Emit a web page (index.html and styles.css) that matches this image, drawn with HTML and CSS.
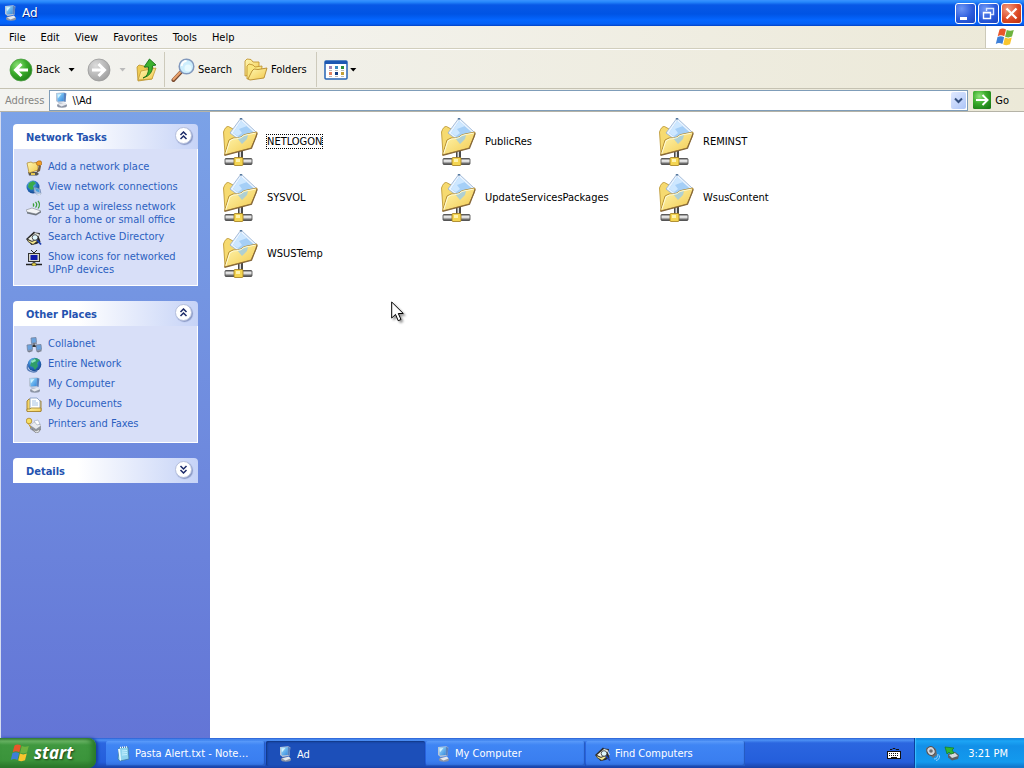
FILE: index.html
```html
<!DOCTYPE html>
<html lang="en">
<head>
    <meta charset="UTF-8">
    <meta name="viewport" content="width=device-width, initial-scale=1.0">
    <title>Ad</title>
    <link rel="stylesheet" href="styles.css">
</head>
<body>
    <!-- shared icons -->
    <svg class="sprite" aria-hidden="true">
        <defs>
            <linearGradient id="folderFill" x1="0" y1="0" x2="1" y2="1">
                <stop offset="0" stop-color="#fff8b4"/><stop offset="1" stop-color="#f2c84b"/>
            </linearGradient>
            <linearGradient id="screenFill" x1="0" y1="0" x2="1" y2="1">
                <stop offset="0" stop-color="#a8e4ff"/><stop offset="1" stop-color="#2f86dd"/>
            </linearGradient>
            <linearGradient id="pipeFill" x1="0" y1="0" x2="0" y2="1">
                <stop offset="0" stop-color="#666"/><stop offset=".4" stop-color="#fff"/><stop offset="1" stop-color="#333"/>
            </linearGradient>
            <radialGradient id="greenFill" cx=".35" cy=".3" r=".8">
                <stop offset="0" stop-color="#8fe37a"/><stop offset=".5" stop-color="#3aab2b"/><stop offset="1" stop-color="#1c7d17"/>
            </radialGradient>
            <radialGradient id="grayFill" cx=".35" cy=".3" r=".8">
                <stop offset="0" stop-color="#dcdcdc"/><stop offset="1" stop-color="#9b9b9b"/>
            </radialGradient>
            <radialGradient id="globeFill" cx=".4" cy=".3" r=".8">
                <stop offset="0" stop-color="#8fd6f5"/><stop offset=".5" stop-color="#2672c4"/><stop offset="1" stop-color="#123a7c"/>
            </radialGradient>
        </defs>
        <symbol id="computer" viewBox="0 0 16 16">
            <ellipse cx="9" cy="13.500" rx="5" ry="2.200" fill="#8d95a5"/>
            <path d="M5 12.500l7-2 1.500 2-5 2z" fill="#e6e9ef"/>
            <path d="M3 1l8-.7 2.300 1L12.500 10l-7 1L3 9z" fill="#b9c4d6"/>
            <path d="M3.700 1.700l7.300-.7-.3 8-6 .6z" fill="url(#screenFill)"/>
            <path d="M4.500 2.500l4-.4-3.700 4.500z" fill="#d3f3ff"/>
            <path d="M11 1l2.300.4-.8 8.600-1.800-1z" fill="#5a82bd"/>
        </symbol>
        <symbol id="share" viewBox="0 0 48 48">
            <path d="M22 32h5v9h-5z" fill="#4a4a4a"/><path d="M23.500 32h1.500v9h-1.500z" fill="#ddd"/>
            <rect x="9" y="40.500" width="27" height="6" rx="1" fill="url(#pipeFill)" stroke="#444" stroke-width=".8"/>
            <rect x="18" y="39.500" width="9" height="8" rx="1" fill="#f4d552" stroke="#a17b1b" stroke-width=".8"/>
            <path d="M20 41h4v3h-4z" fill="#fff3ac"/>
            <path d="M7.500 14q2-6 5-5.500l4.500 2.500 3 4 8 0-3 15-16 6z" fill="#f6da70" stroke="#b89029" stroke-width=".8"/>
            <path d="M25 0L40 14 30 27 14 15z" fill="#eaf4ff" stroke="#91acd0" stroke-width=".8"/>
            <path d="M25 3L37.500 14 29 24 17 15z" fill="#a5cff7"/>
            <path d="M25 3l6 5-8 3 3 4-4 3-5-3z" fill="#cde7ff"/>
            <path d="M23.500 0h3L25 2.500z" fill="#56789d"/>
            <path d="M8.500 37L13 22q4-3 8-2l4-1q3-3 6-3l10-2-1 5-5 11z" fill="url(#folderFill)" stroke="#ad852b" stroke-width=".9"/>
            <path d="M21 20l5-1q3-2 6-2l-1 4-5 5z" fill="#9ccbe6" opacity=".8"/>
            <path d="M9.800 35.500L14 22.700q4-2.500 7-2l4-1q3-3 6-3l8.700-1.600" fill="none" stroke="#fffbd7"/>
            <path d="M8.500 37.300l27-7 5.800-15" fill="none" stroke="#86683a" stroke-width="1.200"/>
        </symbol>
        <symbol id="flag" viewBox="0 0 20 20">
            <path d="M4.500 2.500Q7.500.5 11 2.500L9.300 9.300Q6 7.500 2.700 9.200z" fill="#e8562a"/>
            <path d="M11.800 3Q15 4.500 18.800 3L17 9.600Q13.500 11.200 10.100 9.700z" fill="#6db33f"/>
            <path d="M2.500 10.100Q5.800 8.500 9.100 10.200L7.400 17Q4 15.200.8 16.900z" fill="#3c7fd8"/>
            <path d="M9.900 10.600Q13.300 12.200 16.800 10.600L15 17.300Q11.700 18.900 8.200 17.400z" fill="#f8c52e"/>
        </symbol>
        <symbol id="find" viewBox="0 0 16 16">
            <path d="M0 9l8-7.500 1 1 5 .500-1 3.500 1.500 5.500-4 2-5 1z" fill="#2b2b2b"/>
            <path d="M2 9l7-6 4 1-2 5-5 2z" fill="#f1f1e6"/>
            <path d="M1 9.500l5 2 5-2v2l-4 3-5-3z" fill="#f6e88b" stroke="#333" stroke-width=".7"/>
            <circle cx="9" cy="7.500" r="2.800" fill="#def7ff" stroke="#555"/>
            <path d="M11 10l4 4.500" stroke="#1c3fae" stroke-width="1.800"/>
            <path d="M12.500 5l2 4" stroke="#e7e7e7"/>
        </symbol>
        <symbol id="up-chevrons" viewBox="0 0 9 9">
            <path d="M1.500 4L4.500 1l3 3M1.500 8l3-3 3 3" fill="none" stroke="#1d2b69" stroke-width="1.500"/>
        </symbol>
    </svg>

    <div class="window">
        <header class="titlebar">
            <svg class="icon"><use href="#computer"/></svg>
            <h1>Ad</h1>
            <div class="window-buttons">
                <button type="button" aria-label="Minimize">
                    <svg viewBox="0 0 19 19"><path d="M4 13h7v3H4z" fill="#fff"/></svg>
                </button>
                <button type="button" aria-label="Restore">
                    <svg viewBox="0 0 19 19"><path d="M7.500 7V4.500h7v6H12M7 4.500h8" fill="none" stroke="#dbe7ff" stroke-width="1.400"/><path d="M4.500 8.500h7v6h-7zM4 8.700h8" fill="none" stroke="#fff" stroke-width="1.400"/></svg>
                </button>
                <button type="button" class="close" aria-label="Close">
                    <svg viewBox="0 0 19 19"><path d="M4.500 4.500l10 10M14.500 4.500l-10 10" stroke="#fff" stroke-width="2.300"/></svg>
                </button>
            </div>
        </header>

        <nav class="menubar">
            <button type="button">File</button>
            <button type="button">Edit</button>
            <button type="button">View</button>
            <button type="button">Favorites</button>
            <button type="button">Tools</button>
            <button type="button">Help</button>
            <div class="brand"><svg><use href="#flag"/></svg></div>
        </nav>

        <div class="toolbar">
            <div class="tool-group">
                <button type="button" class="tool">
                    <svg viewBox="0 0 24 24"><circle cx="12" cy="12" r="11" fill="url(#greenFill)" stroke="#4d9c42" stroke-width=".8"/><path d="M19 12H7M12.500 6L6.500 12l6 6" fill="none" stroke="#fff" stroke-width="3"/></svg>
                    Back
                </button>
                <button type="button" class="arrow" aria-label="Back history"></button>
                <button type="button" class="tool forward" aria-label="Forward" disabled>
                    <svg viewBox="0 0 24 24"><circle cx="12" cy="12" r="11" fill="url(#grayFill)" stroke="#999" stroke-width=".8"/><path d="M5 12h12M11.500 6l6 6-6 6" fill="none" stroke="#fff" stroke-width="3"/></svg>
                </button>
                <button type="button" class="arrow" aria-label="Forward history" disabled></button>
                <button type="button" class="tool" aria-label="Up">
                    <svg viewBox="0 0 24 24"><path d="M3 9l2-2 5 1 2 2 7-1-1 12-14 2z" fill="#efcb52" stroke="#b9922e" stroke-width=".8"/><path d="M4 22l3-9 15-3-4 11z" fill="url(#folderFill)" stroke="#c39b36" stroke-width=".8"/><path d="M9 20q6-2 5.500-11H10L15.500 1 22 7l-3.500.8Q19 17 9 20z" fill="#3cb12e" stroke="#176f17" stroke-width=".9"/></svg>
                </button>
            </div>
            <div class="tool-group search-group">
                <button type="button" class="tool">
                    <svg viewBox="0 0 24 24"><path d="M9.500 14.500L2.500 22" stroke="#76472d" stroke-width="4" stroke-linecap="round"/><path d="M9 14.500L2.500 21.300" stroke="#e8a16b" stroke-width="2.300" stroke-linecap="round"/><circle cx="15.500" cy="8.500" r="7.300" fill="#cdeefd" stroke="#8299bd" stroke-width="1.500"/><path d="M10.500 8q1-5 5-5" fill="none" stroke="#fff" stroke-width="2"/><circle cx="17" cy="10" r="3.500" fill="#e8faff"/></svg>
                    Search
                </button>
                <button type="button" class="tool">
                    <svg viewBox="0 0 24 24"><path d="M1 18V3l2-2 4 .5L9 4h6v11z" fill="url(#folderFill)" stroke="#c29632" stroke-width=".9"/><path d="M3 21V8l2-2 4 1 2 2 7-1-1 11z" fill="#fae67e" stroke="#c29632" stroke-width=".9"/><path d="M4 21l4-8 2-2 4 .5L23 10l-3 10-14 2z" fill="url(#folderFill)" stroke="#b78a2d" stroke-width=".9"/></svg>
                    Folders
                </button>
            </div>
            <div class="tool-group views-group">
                <button type="button" class="tool" aria-label="Views">
                    <svg viewBox="0 0 24 24"><rect x="1" y="3" width="22" height="18" rx="1" fill="#fff" stroke="#2463b5" stroke-width="1.500"/><path d="M1 3h22v3H1z" fill="#1e58b2"/><path d="M5 8h3v3H5z" fill="#a283b8"/><path d="M11 8h3v3h-3z" fill="#388bc2"/><path d="M17 8h3v3h-3z" fill="#2c8c39"/><path d="M5 14h3v3H5z" fill="#e18060"/><path d="M11 14h3v3h-3z" fill="#143f84"/><path d="M17 14h3v3h-3z" fill="#c2a037"/><path d="M5 12.500h3m3 0h3m3 0h3M5 18.500h3m3 0h3m3 0h3" stroke="#aaa" stroke-width=".8"/></svg>
                </button>
                <button type="button" class="arrow" aria-label="Choose view"></button>
            </div>
        </div>

        <form class="addressbar">
            <label for="address">Address</label>
            <div class="address-field">
                <svg class="icon"><use href="#computer"/></svg>
                <input type="text" id="address" value="\\Ad">
                <button type="button" class="drop" aria-label="Show addresses">
                    <svg viewBox="0 0 9 9"><path d="M1 2.500l3.500 3.500L8 2.500" fill="none" stroke="#35507f" stroke-width="2"/></svg>
                </button>
            </div>
            <button type="button" class="go">
                <svg viewBox="0 0 18 18"><rect width="18" height="18" rx="1.500" fill="url(#greenFill)"/><path d="M3 9h11M9.500 4L14.500 9l-5 5" fill="none" stroke="#fff" stroke-width="2"/></svg>
                Go
            </button>
        </form>

        <div class="content">
            <aside class="sidebar">
                <section class="panel">
                    <div class="panel-header">
                        <h2>Network Tasks</h2>
                        <button type="button" aria-label="Collapse Network Tasks"><svg><use href="#up-chevrons"/></svg></button>
                    </div>
                    <ul>
                        <li><a href="#">
                            <svg class="icon" viewBox="0 0 16 16"><path d="M2 12h9l2 2-2 1.500H3z" fill="#555"/><path d="M5 13h4v2H5z" fill="#e4c651"/><path d="M1 3l4-1 2 1 5-1v8l-9 3z" fill="url(#folderFill)" stroke="#ab842b" stroke-width=".7"/><path d="M10 3q2-3 5-2l1 3-2 2-3-1z" fill="#ef9d27" stroke="#9b5c18" stroke-width=".6"/><path d="M13 5l2 1-1 5-4 2 2-4z" fill="#705b42"/></svg>
                            Add a network place</a></li>
                        <li><a href="#">
                            <svg class="icon" viewBox="0 0 16 16"><circle cx="7" cy="7" r="6.500" fill="url(#globeFill)"/><path d="M3 3l4-2 3 2-3 3 1 3-3 1-3-3z" fill="#38aa4c"/><path d="M8 7l6 2 1 5-3 1-4-3z" fill="#a8bedd" stroke="#667fae" stroke-width=".7"/><path d="M9 8l4 1.500.5 3L10 11z" fill="#4aa0dc"/><path d="M9 13l3 1 4-1-3 3z" fill="#dce1e9"/></svg>
                            View network connections</a></li>
                        <li><a href="#">
                            <svg class="icon" viewBox="0 0 16 16"><path d="M0 10l6-2 9 3-5 3-9-2z" fill="#f4f5f6" stroke="#8e949b" stroke-width=".7"/><path d="M1 12l9 2 5-3v1.500L10 15.500l-9-2z" fill="#6f767e"/><path d="M7 3.500q1.500 1.500 0 3M9.500 2q2.500 2.500 0 5.500M12 1q3 3.500 0 7.500" fill="none" stroke="#3da139" stroke-width="1.200"/></svg>
                            Set up a wireless network for a home or small office</a></li>
                        <li><a href="#">
                            <svg class="icon"><use href="#find"/></svg>
                            Search Active Directory</a></li>
                        <li><a href="#">
                            <svg class="icon" viewBox="0 0 16 16"><path d="M5 0l3 3 3-3" fill="none" stroke="#222"/><rect x="2.500" y="3.500" width="11" height="8" fill="#d5d5cb" stroke="#333"/><path d="M4.500 5h7v5h-7z" fill="#101bac"/><path d="M8 12v2M0 14.500h16" stroke="#222" stroke-width="1.400"/><path d="M6 13h4v3H6z" fill="#e3d044" stroke="#333" stroke-width=".6"/></svg>
                            Show icons for networked UPnP devices</a></li>
                    </ul>
                </section>

                <section class="panel">
                    <div class="panel-header">
                        <h2>Other Places</h2>
                        <button type="button" aria-label="Collapse Other Places"><svg><use href="#up-chevrons"/></svg></button>
                    </div>
                    <ul>
                        <li><a href="#">
                            <svg class="icon" viewBox="0 0 16 16"><path d="M8 6v4M8 8l-4 3M8 8l4 3" stroke="#333" stroke-width="1.300"/><path d="M5 1l5-.5.500 5-5 1zM1 8l5-.5.500 5-5 1zM10 8l5-.5.500 5-5 1z" fill="#6aa3df" stroke="#77839b" stroke-width=".8"/><path d="M1 14l5-1 1 1-4 1.500zM10 14l5-1 1 1-4 1.500zM5.500 7l5-1 .5 1-4 1z" fill="#777f8e"/></svg>
                            Collabnet</a></li>
                        <li><a href="#">
                            <svg class="icon" viewBox="0 0 16 16"><circle cx="8.500" cy="7.500" r="6.800" fill="url(#globeFill)"/><path d="M6 3l4-2 4 2-3 3 1 3-3 4-2-3-3-1z" fill="#2f9e68"/><path d="M5 4l4-2 1 2-4 2z" fill="#8ee5c1"/><path d="M2 7q-2 6 2 7 3 2 7 0" fill="none" stroke="#5a7fb9" stroke-width="1.500"/></svg>
                            Entire Network</a></li>
                        <li><a href="#">
                            <svg class="icon"><use href="#computer"/></svg>
                            My Computer</a></li>
                        <li><a href="#">
                            <svg class="icon" viewBox="0 0 16 16"><path d="M1 14V4l2-2h3l2 2h7v10z" fill="#f4d566" stroke="#a17d27" stroke-width=".9"/><path d="M4 1h7l3 3v8H4z" fill="#fff" stroke="#7c95bd" stroke-width=".8"/><path d="M6 4h4M6 6h6M6 8h6" stroke="#8db1de" stroke-width=".8"/><path d="M1 14.500V12h3l1-1h10v3.500z" fill="url(#folderFill)" stroke="#a17d27" stroke-width=".8"/></svg>
                            My Documents</a></li>
                        <li><a href="#">
                            <svg class="icon" viewBox="0 0 16 16"><path d="M4 8l6-4 5 4v5l-5 3-6-4z" fill="#9297a1"/><path d="M4 8l5-3 6 3.500L10 12z" fill="#e9ebef"/><path d="M8 4l4-1 2 4-3 1z" fill="#fff" stroke="#9ba6b7" stroke-width=".6"/><path d="M6 12l4 2 4-2-1 3-3 1z" fill="#e6e8ea" stroke="#777" stroke-width=".6"/><circle cx="3" cy="4" r="2.800" fill="#f7df62" stroke="#ae872a" stroke-width=".8"/><path d="M2 6l3 5" stroke="#c79c2d"/></svg>
                            Printers and Faxes</a></li>
                    </ul>
                </section>

                <section class="panel collapsed">
                    <div class="panel-header">
                        <h2>Details</h2>
                        <button type="button" aria-label="Expand Details"><svg><use href="#up-chevrons"/></svg></button>
                    </div>
                </section>
            </aside>

            <main class="files">
                <a href="#" class="file focused"><svg><use href="#share"/></svg><span>NETLOGON</span></a>
                <a href="#" class="file"><svg><use href="#share"/></svg><span>PublicRes</span></a>
                <a href="#" class="file"><svg><use href="#share"/></svg><span>REMINST</span></a>
                <a href="#" class="file"><svg><use href="#share"/></svg><span>SYSVOL</span></a>
                <a href="#" class="file"><svg><use href="#share"/></svg><span>UpdateServicesPackages</span></a>
                <a href="#" class="file"><svg><use href="#share"/></svg><span>WsusContent</span></a>
                <a href="#" class="file"><svg><use href="#share"/></svg><span>WSUSTemp</span></a>
            </main>
        </div>
    </div>

    <footer class="taskbar">
        <button type="button" class="start"><svg><use href="#flag"/></svg>start</button>
        <div class="tasks">
            <button type="button">
                <svg class="icon" viewBox="0 0 16 16"><path d="M4 2l9-1 1 12-9 2-2-2z" fill="#8ed4ee" stroke="#427ca2" stroke-width=".8"/><path d="M3 3l2 12 1-1L5 3z" fill="#eafaff"/><path d="M5 1.500l8-.7" stroke="#fff" stroke-dasharray="1 1" stroke-width="1.500"/><path d="M7 5l5-.5M7 7l5-.5M7 9l5-.5" stroke="#c4f0ff"/></svg>
                <span>Pasta Alert.txt - Notepad</span>
            </button>
            <button type="button" class="active">
                <svg class="icon"><use href="#computer"/></svg>
                <span>Ad</span>
            </button>
            <button type="button">
                <svg class="icon"><use href="#computer"/></svg>
                <span>My Computer</span>
            </button>
            <button type="button">
                <svg class="icon"><use href="#find"/></svg>
                <span>Find Computers</span>
            </button>
        </div>
        <button type="button" class="language" aria-label="Keyboard">
            <svg viewBox="0 0 14 14"><path d="M3 3.500h2l1-1h2l1 1h3" fill="none" stroke="#111"/><rect x=".5" y="5.500" width="13" height="7" fill="#fff" stroke="#111"/><path d="M2 7.500h10M2 9.500h10" stroke="#111" stroke-dasharray="1 1"/><path d="M4 11.500h6" stroke="#111"/></svg>
        </button>
        <div class="tray">
            <svg class="icon" viewBox="0 0 16 16"><path d="M2 3l5-2 5 3 1 6-4 3-3-3-3-1z" fill="#6b6e74"/><ellipse cx="7" cy="6" rx="4" ry="4.500" transform="rotate(-30 7 6)" fill="#d4d6d9" stroke="#4c4e53"/><circle cx="7" cy="6" r="1.800" fill="#696c71"/><path d="M10 14q4 0 4-5M12 15.500q4-1 3.500-5" fill="none" stroke="#9bd0ff"/></svg>
            <svg class="icon" viewBox="0 0 16 16"><path d="M4 9l7-2 4 3-1 4-6 1.500-4-3z" fill="#595f65"/><path d="M5 10l6-2 3 3-6 2z" fill="#d7dbdd"/><path d="M1 2l9 1-2 2 2 3-3 1-2-2-2 2z" fill="#31b733" stroke="#167b22" stroke-width=".7"/></svg>
            <time>3:21 PM</time>
        </div>
    </footer>

    <svg class="cursor" viewBox="0 0 13 21"><path d="M.7 1v16l3.800-3.600 2.700 6.300 2.800-1.200L7.300 12.500h5z" fill="#fff" stroke="#000"/></svg>
</body>
</html>
```
FILE: styles.css
```css
* {
    box-sizing: border-box;
}
body {
    margin: 0;
    height: 100vh;
    display: flex;
    flex-direction: column;
    overflow: hidden;
    font-family: "DejaVu Sans Condensed", Tahoma, sans-serif;
    font-size: 11px;
    line-height: 13px;
    color: #000;
    background: #fff;
}
button, input {
    font: inherit;
    color: inherit;
    margin: 0;
    padding: 0;
    border: none;
    background: none;
}
h1, h2, ul {
    margin: 0;
    padding: 0;
}
a {
    text-decoration: none;
}
svg {
    display: block;
    flex: none;
}
.sprite {
    position: absolute;
    width: 0;
    height: 0;
}
.icon {
    width: 16px;
    height: 16px;
}
.window {
    flex: 1;
    min-height: 0;
    display: flex;
    flex-direction: column;
}

/* title bar */
.titlebar {
    height: 26px;
    flex: none;
    display: flex;
    align-items: center;
    gap: 4px;
    padding: 0 2px;
    background: linear-gradient(#3a93ff 0, #2687fb 2px, #0858e6 5px, #0054e4 14px, #0466ff 20px, #0560f5 24px, #0241c4 26px);
}
.titlebar h1 {
    flex: 1;
    font-family: "DejaVu Sans", sans-serif;
    font-size: 12px;
    font-weight: normal;
    color: #fff;
    text-shadow: 1px 1px #0a2a8c;
}
.window-buttons {
    display: flex;
    gap: 2px;
}
.window-buttons button {
    width: 21px;
    height: 21px;
    border: 1px solid #fff;
    border-radius: 3px;
    background: radial-gradient(circle at 30% 25%, #6e96f5, #2b5bdc 55%, #1a44bf);
}
.window-buttons .close {
    background: radial-gradient(circle at 30% 25%, #f19a80, #dd4a26 55%, #b9300f);
}

/* menu */
.menubar {
    height: 23px;
    flex: none;
    display: flex;
    align-items: center;
    gap: 15px;
    padding-left: 9px;
    background: linear-gradient(90deg, #f6f6f5, #ece9d8);
    border-bottom: 1px solid #d1cebd;
}
.brand {
    align-self: stretch;
    display: flex;
    align-items: center;
    justify-content: center;
    width: 39px;
    margin-left: auto;
    background: #fff;
    border-left: 1px solid #ccc9b9;
}
.brand svg {
    width: 20px;
    height: 20px;
}

/* toolbar */
.toolbar {
    height: 40px;
    flex: none;
    display: flex;
    padding: 2px 0 1px;
    background: linear-gradient(90deg, #f3f3f0, #ece9d8);
    border-top: 1px solid #fff;
    border-bottom: 1px solid #c5c2b2;
}
.tool-group {
    display: flex;
    align-items: center;
    gap: 8px;
    padding: 0 6px 0 9px;
}
.tool-group + .tool-group {
    border-left: 1px solid #cdcabb;
}
.tool {
    display: flex;
    align-items: center;
    gap: 3px;
}
.tool svg {
    width: 24px;
    height: 24px;
}
.forward {
    padding-left: 4px;
}
.search-group {
    gap: 12px;
    padding: 0 9px 0 6px;
}
.views-group {
    gap: 2px;
    padding-left: 7px;
}
.arrow {
    width: 7px;
    height: 4px;
    background: #000;
    clip-path: polygon(0 0, 100% 0, 50% 100%);
}
.arrow:disabled {
    background: #bbb;
}

/* address */
.addressbar {
    height: 23px;
    flex: none;
    display: flex;
    align-items: center;
    gap: 5px;
    padding: 1px 15px 1px 5px;
    background: linear-gradient(90deg, #f3f3f0, #ece9d8);
    border-bottom: 1px solid #b5b3a7;
}
.addressbar label {
    color: #858582;
}
.address-field {
    flex: 1;
    height: 21px;
    display: flex;
    align-items: center;
    gap: 3px;
    padding: 1px 1px 1px 3px;
    border: 1px solid #7f9db9;
    background: #fff;
}
.address-field input {
    flex: 1;
    min-width: 0;
    outline: none;
}
.drop {
    width: 15px;
    height: 17px;
    display: flex;
    align-items: center;
    justify-content: center;
    border-radius: 2px;
    background: linear-gradient(135deg, #e0e9ff, #adc5f8);
}
.drop svg {
    width: 9px;
    height: 9px;
}
.go {
    display: flex;
    align-items: center;
    gap: 4px;
}
.go svg {
    width: 18px;
    height: 18px;
}

/* sidebar */
.content {
    flex: 1;
    min-height: 0;
    display: flex;
}
.sidebar {
    width: 210px;
    flex: none;
    display: flex;
    flex-direction: column;
    gap: 15px;
    padding: 12px;
    border-left: 1px solid #d5dcf0;
    background: linear-gradient(#7ba2e7, #6375d6);
}
.panel-header {
    height: 25px;
    display: flex;
    align-items: center;
    justify-content: space-between;
    padding: 2px 6px 0 13px;
    border-radius: 4px 4px 0 0;
    background: linear-gradient(90deg, #fff 35%, #c6d3f7);
}
.panel h2 {
    font-size: 11px;
    color: #2553b0;
}
.panel-header button {
    width: 17px;
    height: 17px;
    display: flex;
    align-items: center;
    justify-content: center;
    margin-bottom: 4px;
    border: 1px solid #b5bfdc;
    border-radius: 50%;
    background: #fff;
    box-shadow: 1px 1px 1px #8998c4;
}
.panel-header svg {
    width: 9px;
    height: 9px;
}
.collapsed svg {
    transform: rotate(180deg);
}
.panel ul {
    display: flex;
    flex-direction: column;
    gap: 4px;
    padding: 11px 12px 9px;
    list-style: none;
    background: #d8dff8;
    border: 1px solid #fff;
    border-top: none;
}
.panel li a {
    display: flex;
    align-items: flex-start;
    gap: 6px;
    color: #2c5fc0;
}

/* file tiles */
.files {
    flex: 1;
    display: grid;
    grid-template-columns: repeat(auto-fill, 218px);
    grid-auto-rows: 48px;
    row-gap: 8px;
    align-content: start;
    padding: 6px;
    background: #fff;
}
.file {
    display: flex;
    align-items: center;
    gap: 2px;
    color: #000;
}
.file svg {
    width: 48px;
    height: 48px;
}
.file span {
    border: 1px dotted transparent;
    margin-bottom: 2px;
}
.file.focused span {
    border-color: #000;
}

/* taskbar */
.taskbar {
    height: 30px;
    flex: none;
    display: flex;
    align-items: stretch;
    color: #fff;
    background: linear-gradient(#2a5fd3 0, #4d92f5 2px, #2b66e0 5px, #245edb 24px, #1941a5 30px);
}
.start {
    width: 96px;
    display: flex;
    align-items: center;
    gap: 4px;
    padding: 0 0 0 10px;
    border-radius: 0 8px 8px 0;
    font-family: "Open Sans", sans-serif;
    font-size: 17px;
    font-weight: bold;
    font-style: italic;
    line-height: 20px;
    text-shadow: 1px 1px 2px #1c3d16;
    background: linear-gradient(#3a7b3a 0, #6bb566 3px, #3f983f 7px, #3b943b 22px, #2a742a 30px);
    box-shadow: inset -4px 0 5px #2a7a2a, 2px 0 3px #173f9d;
}
.start svg {
    width: 20px;
    height: 20px;
}
.tasks {
    flex: 1;
    min-width: 0;
    display: flex;
    gap: 1px;
    padding: 3px 0 2px 10px;
}
.tasks button {
    flex: 0 1 159px;
    min-width: 0;
    display: flex;
    align-items: center;
    gap: 4px;
    padding: 0 13px 0 9px;
    border-radius: 2px;
    text-align: left;
    background: linear-gradient(#5a9bfa 0, #3f85f4 4px, #3a7ef0 20px, #326fdd);
    box-shadow: inset -1px -1px 1px #2357bd;
}
.tasks .active {
    padding: 1px 12px 0 11px;
    background: #1c4fb9;
    box-shadow: inset 1px 1px 2px #10357f;
}
.tasks span {
    overflow: hidden;
    white-space: nowrap;
    text-overflow: ellipsis;
}
.language {
    padding: 0 13px;
}
.language svg {
    width: 14px;
    height: 14px;
}
.tray {
    width: 110px;
    display: flex;
    align-items: center;
    gap: 4px;
    padding-left: 9px;
    border-left: 1px solid #0a3f9c;
    background: linear-gradient(#0f7fdb 0, #1ca5f5 3px, #1290e8 8px, #139aee 24px, #0f6fc4 30px);
    box-shadow: inset 1px 0 1px #3fc0ff;
}
.tray time {
    margin-left: auto;
    padding-right: 16px;
}

.cursor {
    position: absolute;
    left: 391px;
    top: 301px;
    width: 13px;
    height: 21px;
    filter: drop-shadow(2px 2px 1px rgba(0, 0, 0, 0.4));
    pointer-events: none;
}
```
